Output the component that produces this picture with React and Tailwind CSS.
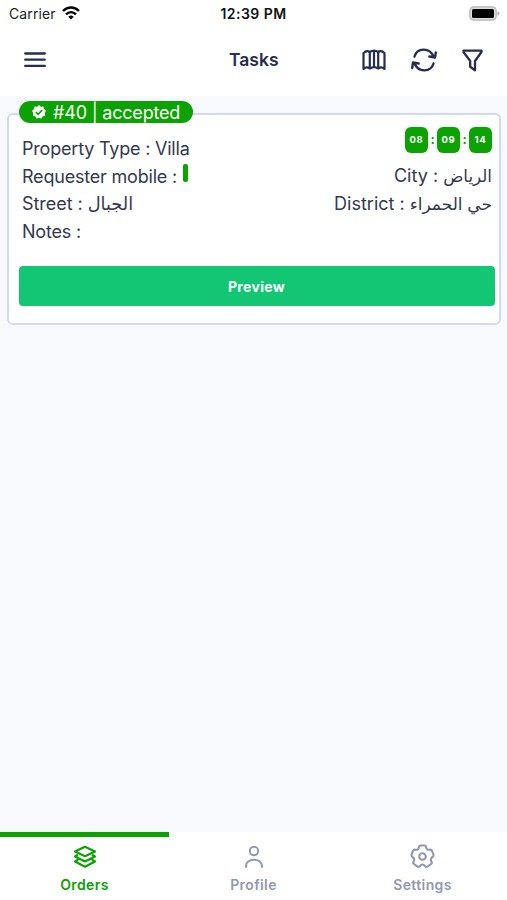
const timer = ['08', '09', '14']

const StatusBar = () => (
  <div className="grid h-7 grid-cols-3 items-center pl-[9px] pr-[7px] text-[#222]">
    <div className="-mt-px flex items-center gap-[6px]">
      <span className="text-[14px] tracking-[0.1px]">Carrier</span>
      <svg className="-mt-px" width="18" height="14" viewBox="0 0 18 14" fill="none" stroke="#000" strokeWidth="2.500">
        <path d="M1 5C5.500 .4 12.500 .4 17 5" />
        <path d="M4 8.300C7 5.400 11 5.400 14 8.300" />
        <path d="M6.300 10.700Q9 8.300 11.700 10.700L9 13.600Z" fill="#000" stroke="none" />
      </svg>
    </div>
    <span className="-ml-[2px] -mt-px text-center text-[14px] font-semibold tracking-[0.45px] whitespace-nowrap text-[#111]">12:39 PM</span>
    <svg className="-mt-[2px] justify-self-end" width="31" height="15" viewBox="0 0 31 15">
      <rect x=".8" y=".8" width="26.400" height="13.400" rx="4" fill="#ddd" stroke="#b5b5b5" strokeWidth="1.200" />
      <rect x="3" y="3" width="22" height="9" rx="1.500" fill="#000" />
      <path d="M28.500 5.500C31 6 31 9 28.500 9.500Z" fill="#aaa" />
    </svg>
  </div>
)

const Header = () => (
  <header className="flex h-[68px] items-center pb-1 pl-6 pr-6 text-[#272d4e]">
    <svg width="22" height="16" viewBox="0 0 22 16" stroke="currentColor" strokeWidth="2.300" strokeLinecap="round">
      <path d="M1.200 1.500H20.800M1.200 7.700H20.800M1.200 13.900H20.800" />
    </svg>
    <h1 className="ml-[183px] w-[60px] text-[17.500px] font-semibold">Tasks</h1>
    <div className="ml-auto flex items-center gap-6">
      <svg width="24" height="22" viewBox="0 0 24 22" fill="none" stroke="currentColor" strokeWidth="2.200" strokeLinejoin="round">
        <path d="M1.500 4.200Q4.500 .8 7.800 3Q12 .2 16.200 3Q19.500 .8 22.500 4.200V20Q19.500 17 16.200 19.500Q12 16.800 7.800 19.500Q4.500 17 1.500 20Z" />
        <path d="M7.800 3V19.500M12 2V18M16.200 3V19.500" />
      </svg>
      <svg width="28" height="24" viewBox="0 0 28 24" fill="none" stroke="currentColor" strokeWidth="2.400" strokeLinecap="round" strokeLinejoin="round">
        <path d="M4.500 8.500C7 -.2 19.500-1 23.500 8.500M25.800 4.500L25 9.500L19.300 8.500" />
        <path d="M23.500 15.500C21 24.200 8.500 25 4.500 15.500M2.200 20L3 14.500L8.700 15.500" />
      </svg>
      <svg className="mt-px" width="21" height="23" viewBox="0 0 21 23" fill="none" stroke="currentColor" strokeWidth="2.300" strokeLinejoin="round">
        <path d="M1.500 1.600H19.500V3L13 12V21.300L8.200 17.800V12L1.500 3Z" />
      </svg>
    </div>
  </header>
)

const TaskCard = () => (
  <section className="relative mx-[7px] mt-[17px] h-[212px] w-[494px] rounded-[6px] border-2 border-[#d0d8fd] bg-white px-[10px] text-[#35384d]">
    <div className="absolute left-[10px] -top-[14px] flex h-[22px] w-[174px] items-center gap-[7px] rounded-full bg-[#0ba202] pl-[13px] text-white">
      <svg width="14" height="14" viewBox="0 0 24 24">
        <path fill="#fff" d="M12 0L15 3L19.500 2.500L20.500 7L24 10L22 13.500L22.500 18L18 19.500L16 23.500L12 22L8 23.500L6 19.500L1.500 18L2 13.500L0 10L3.500 7L4.500 2.500L9 3Z" />
        <path fill="none" stroke="#0ba202" strokeWidth="2.800" d="M6.500 12L10.500 16L17.500 8.500" />
      </svg>
      <span className="pt-px text-[18px] leading-[22px] tracking-[-0.200px] whitespace-nowrap">#40 | accepted</span>
    </div>

    <div className="-mr-[3px] flex h-[151px] justify-between pl-[3px] text-[18px] leading-[27.500px] tracking-[-0.200px]">
      <div className="pt-[20px]">
        <p>Property Type : Villa</p>
        <p className="flex">
          Requester mobile :
          <span className="ml-[6px] mt-px h-[18px] w-[5px] rounded-[2px] bg-[#0ba202]" />
        </p>
        <p className="tracking-[-0.050px]">Street : <bdi className="text-[17.800px] tracking-normal">الجبال</bdi></p>
        <p>Notes :</p>
      </div>
      <div className="flex flex-col items-end pt-[12px]">
        <div className="mb-[8.500px] flex h-[26px] items-center">
          {timer.map((value, i) => (
            <div key={value} className="flex items-center">
              {i > 0 && <span className="w-[9px] text-center text-[13px] font-bold text-[#0ba202]">:</span>}
              <span className="flex h-[26px] w-[23px] items-center justify-center rounded-[6px] bg-[#0ba202] text-[9.500px] font-bold tracking-[0.7px] text-white">
                {value}
              </span>
            </div>
          ))}
        </div>
        <p className="tracking-normal">City : <bdi className="text-[16.700px]">الرياض</bdi></p>
        <p className="tracking-normal">District : <bdi className="text-[17px]">حي الحمراء</bdi></p>
      </div>
    </div>

    <button className="h-10 w-[476px] rounded-[4px] bg-[#12c673] text-[14px] font-bold tracking-[0.35px] text-white">
      <span className="-ml-px">Preview</span>
    </button>
  </section>
)

const BottomNav = () => (
  <nav className="grid h-[68px] grid-cols-3 bg-white text-[14px] font-semibold tracking-[0.4px] text-[#9297b1]">
    <div className="flex flex-col items-center border-t-[5px] border-[#0ba202] pt-[8px] text-[#0ba202]">
      <svg width="24" height="24" viewBox="0 0 24 24" fill="none" stroke="currentColor" strokeWidth="2.200" strokeLinejoin="round">
        <path d="M12 1.800L22 6.500L12 11.200L2 6.500Z" />
        <path d="M5 9.800L2 11.500L12 16.500L22 11.500L19 9.800M5 14.800L2 16.500L12 21.700L22 16.500L19 14.800" />
      </svg>
      <span className="mt-[5px]">Orders</span>
    </div>
    <div className="flex flex-col items-center pt-[13px]">
      <svg width="24" height="24" viewBox="0 0 24 24" fill="none" stroke="currentColor" strokeWidth="2" strokeLinecap="round">
        <circle cx="12" cy="6" r="4.200" />
        <path d="M4 22V21C4 12.500 20 12.500 20 21V22" />
      </svg>
      <span className="mt-[5px]">Profile</span>
    </div>
    <div className="flex flex-col items-center pt-[12px]">
      <svg width="25" height="25" viewBox="0 0 25 25" fill="none" stroke="currentColor" strokeWidth="2.100" strokeLinejoin="round">
        <path d="M10.500 1.500H14.500Q16 1.500 16.200 3.500Q16.600 6.200 19.200 5.700Q21.300 5.200 22 6.800L23.400 10.500Q23.900 12 22.300 13.200Q20 15 21.300 17.200Q22.300 19 21 20L17.800 22.300Q16.300 23.400 15 22Q12.500 19 10 22Q8.700 23.400 7.200 22.300L4 20Q2.700 19 3.700 17.200Q5 15 2.700 13.200Q1.100 12 1.600 10.500L3 6.800Q3.700 5.200 5.800 5.700Q8.400 6.200 8.800 3.500Q9 1.500 10.500 1.500Z" />
        <circle cx="12.500" cy="12.500" r="3.300" />
      </svg>
      <span className="mt-[5px]">Settings</span>
    </div>
  </nav>
)

const App = () => {
  return (
    <div className="flex h-[900px] w-[507px] flex-col overflow-hidden bg-[#f7f9fd] font-[Inter,'DejaVu_Sans',sans-serif]">
      <div className="bg-white">
        <StatusBar />
        <Header />
      </div>
      <main className="flex-1">
        <TaskCard />
      </main>
      <BottomNav />
    </div>
  )
}

export default App
